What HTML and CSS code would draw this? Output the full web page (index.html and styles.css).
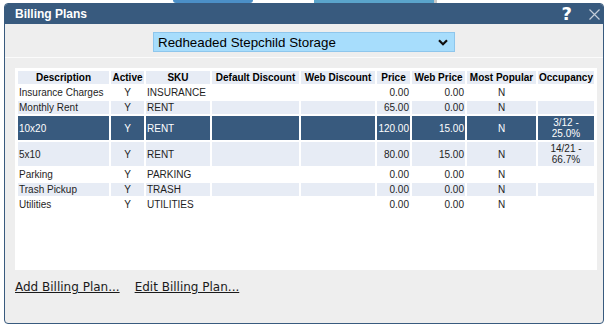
FILE: index.html
```html
<!DOCTYPE html>
<html lang="en">
<head>
    <meta charset="UTF-8">
    <meta name="viewport" content="width=device-width, initial-scale=1.0">
    <title>Billing Plans</title>
    <link rel="stylesheet" href="styles.css">
</head>
<body>
    <div class="page-strip">
        <span class="strip-gap-a"></span>
        <span class="strip-logo"></span>
        <span class="strip-gap-b"></span>
        <span class="strip-tab"></span>
        <span class="strip-edge"></span>
    </div>

    <div class="dialog">
        <div class="title-bar">
            <span class="title">Billing Plans</span>
            <div class="title-tools">
                <span class="help">?</span>
                <svg class="close" width="11" height="11" viewBox="0 0 11 11">
                    <path d="M0.5 0.5 L10.5 10.5 M10.5 0.5 L0.5 10.5" stroke="#c3ccd8" stroke-width="1.2" fill="none"/>
                </svg>
            </div>
        </div>

        <div class="dialog-body">
            <div class="facility-row">
                <div class="facility-select">
                    <span>Redheaded Stepchild Storage</span>
                    <svg class="chevron" width="10" height="7" viewBox="0 0 10 7">
                        <path d="M1 1.3 L5 5.3 L9 1.3" fill="none" stroke="#111" stroke-width="2.2"/>
                    </svg>
                </div>
            </div>

            <div class="plans-section">
                <div class="plans-panel">
                    <table class="plans">
                        <colgroup>
                            <col class="col-desc">
                            <col class="col-active">
                            <col class="col-sku">
                            <col class="col-default">
                            <col class="col-webdisc">
                            <col class="col-price">
                            <col class="col-webprice">
                            <col class="col-popular">
                            <col class="col-occ">
                        </colgroup>
                        <thead>
                            <tr>
                                <th>Description</th>
                                <th>Active</th>
                                <th>SKU</th>
                                <th>Default Discount</th>
                                <th>Web Discount</th>
                                <th>Price</th>
                                <th>Web Price</th>
                                <th>Most Popular</th>
                                <th>Occupancy</th>
                            </tr>
                        </thead>
                        <tbody>
                            <tr>
                                <td>Insurance Charges</td>
                                <td class="mid">Y</td>
                                <td>INSURANCE</td>
                                <td></td>
                                <td></td>
                                <td class="num">0.00</td>
                                <td class="num">0.00</td>
                                <td class="mid">N</td>
                                <td class="mid"></td>
                            </tr>
                            <tr class="alt">
                                <td>Monthly Rent</td>
                                <td class="mid">Y</td>
                                <td>RENT</td>
                                <td></td>
                                <td></td>
                                <td class="num">65.00</td>
                                <td class="num">0.00</td>
                                <td class="mid">N</td>
                                <td class="mid"></td>
                            </tr>
                            <tr class="selected">
                                <td>10x20</td>
                                <td class="mid">Y</td>
                                <td>RENT</td>
                                <td></td>
                                <td></td>
                                <td class="num">120.00</td>
                                <td class="num">15.00</td>
                                <td class="mid">N</td>
                                <td class="mid">3/12 - 25.0%</td>
                            </tr>
                            <tr class="alt">
                                <td>5x10</td>
                                <td class="mid">Y</td>
                                <td>RENT</td>
                                <td></td>
                                <td></td>
                                <td class="num">80.00</td>
                                <td class="num">15.00</td>
                                <td class="mid">N</td>
                                <td class="mid">14/21 - 66.7%</td>
                            </tr>
                            <tr>
                                <td>Parking</td>
                                <td class="mid">Y</td>
                                <td>PARKING</td>
                                <td></td>
                                <td></td>
                                <td class="num">0.00</td>
                                <td class="num">0.00</td>
                                <td class="mid">N</td>
                                <td class="mid"></td>
                            </tr>
                            <tr class="alt">
                                <td>Trash Pickup</td>
                                <td class="mid">Y</td>
                                <td>TRASH</td>
                                <td></td>
                                <td></td>
                                <td class="num">0.00</td>
                                <td class="num">0.00</td>
                                <td class="mid">N</td>
                                <td class="mid"></td>
                            </tr>
                            <tr>
                                <td>Utilities</td>
                                <td class="mid">Y</td>
                                <td>UTILITIES</td>
                                <td></td>
                                <td></td>
                                <td class="num">0.00</td>
                                <td class="num">0.00</td>
                                <td class="mid">N</td>
                                <td class="mid"></td>
                            </tr>
                        </tbody>
                    </table>
                </div>

                <div class="actions">
                    <a href="#" class="action-link">Add Billing Plan...</a>
                    <a href="#" class="action-link">Edit Billing Plan...</a>
                </div>
            </div>
        </div>
    </div>
</body>
</html>
```

FILE: styles.css
```css
:root {
    --dialog-blue: #385a7e;
    --dialog-gray: #eeeeee;
    --row-alt: #e7ecf5;
    --text-dark: #1e1e1e;
}

body {
    margin: 0;
    padding: 0;
    background-color: #ffffff;
    font-family: 'Liberation Sans', Arial, sans-serif;
    color: var(--text-dark);
}

/* bits of the page behind the dialog */
.page-strip {
    display: flex;
    height: 3px;
}

.strip-gap-a {
    width: 173px;
}

.strip-logo {
    width: 80px;
    background-color: #4b8fc7;
    border-radius: 0 0 6px 6px;
}

.strip-gap-b {
    width: 61px;
}

.strip-tab {
    width: 120px;
    background-color: #5aa4cb;
}

.strip-edge {
    width: 3px;
    background-color: #c9c9c9;
}

.dialog {
    width: 600px;
    height: 321px;
    margin-left: 4px;
    box-sizing: border-box;
    border: 1px solid var(--dialog-blue);
    border-radius: 4px;
    background-color: var(--dialog-gray);
    display: flex;
    flex-direction: column;
    overflow: hidden;
}

.title-bar {
    height: 20px;
    margin-top: -1px;
    padding: 1px 3px 0 10px;
    background-color: var(--dialog-blue);
    display: flex;
    align-items: center;
    justify-content: space-between;
}

.title {
    color: #ffffff;
    font-size: 12px;
    font-weight: bold;
}

.title-tools {
    display: flex;
    align-items: center;
    gap: 17px;
}

.help {
    color: #ffffff;
    font-family: 'DejaVu Sans', sans-serif;
    font-weight: bold;
    font-size: 18px;
    line-height: 18px;
}

.close {
    display: block;
    margin-top: 1px;
}

.dialog-body {
    flex: 1;
    display: flex;
    flex-direction: column;
}

.facility-row {
    display: flex;
    justify-content: center;
    padding: 8px 0 5px;
}

.facility-select {
    width: 302px;
    height: 20px;
    box-sizing: border-box;
    padding: 0 6px 0 4px;
    border: 1px solid #8ec6ec;
    background-color: #a7ddfc;
    display: flex;
    align-items: center;
    justify-content: space-between;
    font-size: 13.33px;
    color: #000000;
}

.chevron {
    display: block;
    margin-top: 1px;
}

.plans-section {
    border-top: 1px solid #fbfbfb;
    padding: 10px 0 0 10px;
}

.plans-panel {
    width: 582px;
    height: 202px;
    box-sizing: border-box;
    padding: 1px;
    background-color: #ffffff;
}

.plans {
    table-layout: fixed;
    width: 580px;
    border-collapse: separate;
    border-spacing: 2px;
    font-size: 10px;
    color: var(--text-dark);
}

.col-desc { width: 91px; }
.col-active { width: 33px; }
.col-sku { width: 64px; }
.col-default { width: 87px; }
.col-webdisc { width: 74px; }
.col-price { width: 33px; }
.col-webprice { width: 53px; }
.col-popular { width: 69px; }
.col-occ { width: 56px; }

.plans th,
.plans td {
    padding: 1px;
    height: 11px;
    line-height: 11px;
    vertical-align: middle;
    overflow: hidden;
}

.plans th {
    background-color: var(--row-alt);
    text-align: center;
    font-weight: bold;
    color: #000000;
    white-space: nowrap;
}

.plans td {
    text-align: left;
}

.plans td.mid {
    text-align: center;
}

.plans td.num {
    text-align: right;
}

.plans tr.alt td {
    background-color: var(--row-alt);
}

.plans tr.selected td {
    background-color: var(--dialog-blue);
    color: #ffffff;
}

.actions {
    display: flex;
    gap: 15px;
    margin-top: 10px;
    padding-left: 0;
}

.action-link {
    font-family: 'DejaVu Sans', Verdana, sans-serif;
    font-size: 12px;
    line-height: 14px;
    color: #1a1a1a;
    text-decoration: underline;
}
```
